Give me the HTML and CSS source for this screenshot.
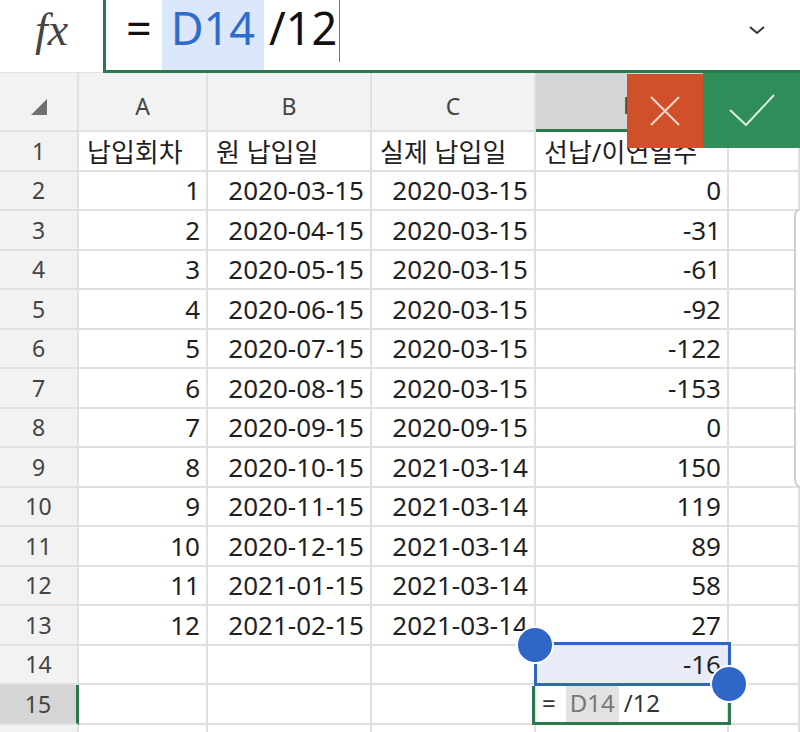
FILE: index.html
```html
<!DOCTYPE html>
<html lang="ko">
<head>
    <meta charset="UTF-8">
    <meta name="viewport" content="width=device-width, initial-scale=1.0">
    <title>Sheet</title>
    <link rel="stylesheet" href="styles.css">
</head>
<body>
    <div class="formula-bar">
        <div class="fx">fx</div>
        <div class="formula-input">
            <span class="eq">=</span><span class="ref">D14</span><span class="rest">/12</span><span class="caret"></span>
            <svg class="chevron" width="18" height="12" viewBox="0 0 18 12"><polyline points="2,3 9,9 16,3" fill="none" stroke="#333" stroke-width="2"/></svg>
        </div>
    </div>

    <div class="sheet">
        <div class="row head">
            <div class="cell corner"><svg width="16" height="16" viewBox="0 0 16 16"><polygon points="16,0 16,16 0,16" fill="#6f6f6f"/></svg></div>
            <div class="cell col">A</div>
            <div class="cell col">B</div>
            <div class="cell col">C</div>
            <div class="cell col sel">D</div>
            <div class="cell col">E</div>
        </div>
        <div class="row">
            <div class="cell num">1</div>
            <div class="cell txt">납입회차</div>
            <div class="cell txt">원 납입일</div>
            <div class="cell txt">실제 납입일</div>
            <div class="cell txt">선납/이연일수</div>
            <div class="cell"></div>
        </div>
        <div class="row"><div class="cell num">2</div><div class="cell">1</div><div class="cell">2020-03-15</div><div class="cell">2020-03-15</div><div class="cell">0</div><div class="cell"></div></div>
        <div class="row"><div class="cell num">3</div><div class="cell">2</div><div class="cell">2020-04-15</div><div class="cell">2020-03-15</div><div class="cell">-31</div><div class="cell"></div></div>
        <div class="row"><div class="cell num">4</div><div class="cell">3</div><div class="cell">2020-05-15</div><div class="cell">2020-03-15</div><div class="cell">-61</div><div class="cell"></div></div>
        <div class="row"><div class="cell num">5</div><div class="cell">4</div><div class="cell">2020-06-15</div><div class="cell">2020-03-15</div><div class="cell">-92</div><div class="cell"></div></div>
        <div class="row"><div class="cell num">6</div><div class="cell">5</div><div class="cell">2020-07-15</div><div class="cell">2020-03-15</div><div class="cell">-122</div><div class="cell"></div></div>
        <div class="row"><div class="cell num">7</div><div class="cell">6</div><div class="cell">2020-08-15</div><div class="cell">2020-03-15</div><div class="cell">-153</div><div class="cell"></div></div>
        <div class="row"><div class="cell num">8</div><div class="cell">7</div><div class="cell">2020-09-15</div><div class="cell">2020-09-15</div><div class="cell">0</div><div class="cell"></div></div>
        <div class="row"><div class="cell num">9</div><div class="cell">8</div><div class="cell">2020-10-15</div><div class="cell">2021-03-14</div><div class="cell">150</div><div class="cell"></div></div>
        <div class="row"><div class="cell num">10</div><div class="cell">9</div><div class="cell">2020-11-15</div><div class="cell">2021-03-14</div><div class="cell">119</div><div class="cell"></div></div>
        <div class="row"><div class="cell num">11</div><div class="cell">10</div><div class="cell">2020-12-15</div><div class="cell">2021-03-14</div><div class="cell">89</div><div class="cell"></div></div>
        <div class="row"><div class="cell num">12</div><div class="cell">11</div><div class="cell">2021-01-15</div><div class="cell">2021-03-14</div><div class="cell">58</div><div class="cell"></div></div>
        <div class="row"><div class="cell num">13</div><div class="cell">12</div><div class="cell">2021-02-15</div><div class="cell">2021-03-14</div><div class="cell">27</div><div class="cell"></div></div>
        <div class="row"><div class="cell num">14</div><div class="cell"></div><div class="cell"></div><div class="cell"></div><div class="cell active">-16</div><div class="cell"></div></div>
        <div class="row"><div class="cell num sel-row">15</div><div class="cell"></div><div class="cell"></div><div class="cell"></div><div class="cell"></div><div class="cell"></div></div>
        <div class="row"><div class="cell num">16</div><div class="cell"></div><div class="cell"></div><div class="cell"></div><div class="cell"></div><div class="cell"></div></div>

        <!-- overlays -->
        <div class="btn-cancel">
            <svg width="32" height="32" viewBox="0 0 32 32"><path d="M2 2 L30 30 M30 2 L2 30" stroke="#f6d8cc" stroke-width="2"/></svg>
        </div>
        <div class="btn-ok">
            <svg width="48" height="36" viewBox="0 0 48 36"><polyline points="2,18 18,33 46,3" fill="none" stroke="#d6f2de" stroke-width="2"/></svg>
        </div>
        <div class="selection"></div>
        <div class="editor">
            <span class="ed-eq">=</span><span class="ed-ref">D14</span><span class="ed-rest">/12</span>
        </div>
        <div class="handle handle-top"></div>
        <div class="handle handle-bottom"></div>
        <div class="scroll-thumb"></div>
    </div>
</body>
</html>
```

FILE: styles.css
```css
body {
    margin: 0;
    background-color: white;
    font-family: "Noto Sans", "Noto Sans CJK KR", sans-serif;
    color: #1f1f1f;
    width: 800px;
    height: 732px;
    overflow: hidden;
}
.formula-bar {
    display: flex;
    height: 73px;
}
.fx {
    width: 103px;
    box-sizing: border-box;
    border-bottom: 1px solid #e2e2e2;
    font-family: "Liberation Serif", serif;
    font-style: italic;
    font-size: 46px;
    color: #444;
    text-align: center;
    line-height: 60px;
}
.formula-input {
    flex: 1;
    display: flex;
    align-items: stretch;
    border-left: 3px solid #2b7a4b;
    border-bottom: 3px solid #2b7a4b;
    padding-left: 20px;
    font-size: 45px;
    line-height: 56px;
    color: #111;
}
.formula-input .eq {
    margin-right: 10px;
}
.formula-input .ref {
    background-color: #dbe7fb;
    color: #2f6ccc;
    padding: 0 9px;
}
.formula-input .rest {
    margin-left: 5px;
}
.formula-input .caret {
    width: 1px;
    height: 62px;
    background-color: #777;
    margin-left: 2px;
}
.formula-input .chevron {
    margin-left: auto;
    margin-right: 34px;
    margin-top: 24px;
}
.sheet {
    position: relative;
    overflow: hidden;
    height: 659px;
}
.row {
    display: grid;
    grid-template-columns: 79px 129px 164px 164px 193px 1fr;
    height: 39.5px;
}
.row.head {
    height: 59px;
}
.cell {
    box-sizing: border-box;
    border-right: 2px solid #e0e0e0;
    border-bottom: 2px solid #e0e0e0;
    display: flex;
    align-items: center;
    justify-content: flex-end;
    padding-right: 6px;
    font-size: 26px;
    white-space: nowrap;
    overflow: visible;
}
.cell.txt {
    justify-content: flex-start;
    padding-left: 8px;
    font-size: 26px;
}
.cell.num {
    background-color: #f2f2f2;
    justify-content: center;
    padding-right: 0;
    font-size: 23px;
    color: #444;
}
.cell.sel-row {
    background-color: #d5d5d5;
    border-right: 3px solid #2b7a4b;
}
.head .cell {
    background-color: #f2f2f2;
    justify-content: center;
    padding: 8px 0 0 0;
    font-size: 23px;
    color: #444;
}
.head .cell.corner {
    padding: 10px 0 0 0;
}
.head .cell.sel {
    background-color: #d5d5d5;
    border-bottom: 3px solid #2b7a4b;
}
.cell.active {
    background-color: #e9ecf6;
}
.btn-cancel {
    position: absolute;
    left: 627px;
    top: 1px;
    width: 76px;
    height: 74px;
    background-color: #d0502a;
    display: flex;
    align-items: center;
    justify-content: center;
}
.btn-ok {
    position: absolute;
    left: 703px;
    top: -2px;
    width: 97px;
    height: 77px;
    background-color: #2e8d58;
    display: flex;
    align-items: center;
    justify-content: center;
}
.selection {
    position: absolute;
    left: 534px;
    top: 569px;
    width: 197px;
    height: 44px;
    box-sizing: border-box;
    border: 3px solid #3066c2;
}
.editor {
    position: absolute;
    left: 532px;
    top: 613px;
    width: 199px;
    height: 39px;
    box-sizing: border-box;
    border: 3px solid #2b7a4b;
    border-top: none;
    display: flex;
    align-items: stretch;
    padding: 0 0 0 7px;
    font-size: 24px;
    line-height: 34px;
    color: #333;
}
.editor .ed-ref {
    background-color: #e2e2e2;
    color: #777;
    margin-left: 10px;
    padding: 0 4px;
}
.editor .ed-rest {
    margin-left: 5px;
}
.handle {
    position: absolute;
    width: 34px;
    height: 34px;
    border-radius: 50%;
    background-color: #2f66c8;
    border: 2px solid white;
}
.handle-top {
    left: 516px;
    top: 553px;
}
.handle-bottom {
    left: 710px;
    top: 592px;
}
.scroll-thumb {
    position: absolute;
    left: 794px;
    top: 135px;
    width: 20px;
    height: 280px;
    box-sizing: border-box;
    border: 2px solid #cfcfcf;
    border-radius: 8px;
    background-color: white;
}
```
